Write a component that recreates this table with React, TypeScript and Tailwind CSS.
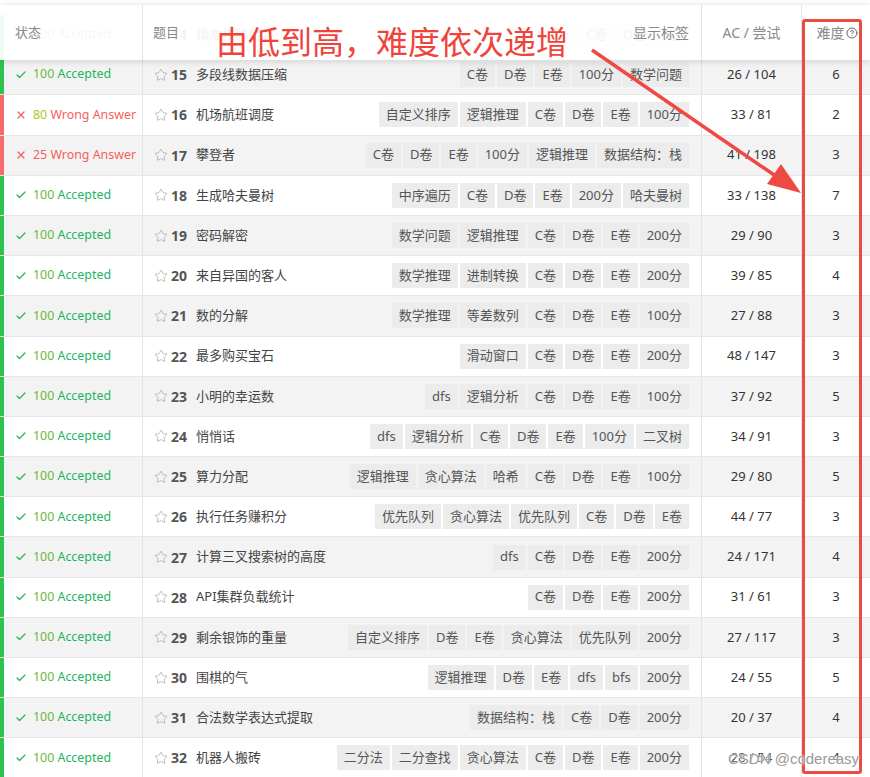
import React from "react";
import { Check, X, Star, CircleHelp } from "lucide-react";

type Row = {
  id: number;
  ok: boolean;
  score: number;
  title: string;
  tags: string[];
  ac: string;
  level: number;
};

const rows: Row[] = [
  { id: 14, ok: true, score: 100, title: "精准核酸检测", tags: ["100分", "C卷", "D卷", "E卷"], ac: "30 / 72", level: 4 },
  { id: 15, ok: true, score: 100, title: "多段线数据压缩", tags: ["C卷", "D卷", "E卷", "100分", "数学问题"], ac: "26 / 104", level: 6 },
  { id: 16, ok: false, score: 80, title: "机场航班调度", tags: ["自定义排序", "逻辑推理", "C卷", "D卷", "E卷", "100分"], ac: "33 / 81", level: 2 },
  { id: 17, ok: false, score: 25, title: "攀登者", tags: ["C卷", "D卷", "E卷", "100分", "逻辑推理", "数据结构：栈"], ac: "41 / 198", level: 3 },
  { id: 18, ok: true, score: 100, title: "生成哈夫曼树", tags: ["中序遍历", "C卷", "D卷", "E卷", "200分", "哈夫曼树"], ac: "33 / 138", level: 7 },
  { id: 19, ok: true, score: 100, title: "密码解密", tags: ["数学问题", "逻辑推理", "C卷", "D卷", "E卷", "200分"], ac: "29 / 90", level: 3 },
  { id: 20, ok: true, score: 100, title: "来自异国的客人", tags: ["数学推理", "进制转换", "C卷", "D卷", "E卷", "200分"], ac: "39 / 85", level: 4 },
  { id: 21, ok: true, score: 100, title: "数的分解", tags: ["数学推理", "等差数列", "C卷", "D卷", "E卷", "100分"], ac: "27 / 88", level: 3 },
  { id: 22, ok: true, score: 100, title: "最多购买宝石", tags: ["滑动窗口", "C卷", "D卷", "E卷", "200分"], ac: "48 / 147", level: 3 },
  { id: 23, ok: true, score: 100, title: "小明的幸运数", tags: ["dfs", "逻辑分析", "C卷", "D卷", "E卷", "100分"], ac: "37 / 92", level: 5 },
  { id: 24, ok: true, score: 100, title: "悄悄话", tags: ["dfs", "逻辑分析", "C卷", "D卷", "E卷", "100分", "二叉树"], ac: "34 / 91", level: 3 },
  { id: 25, ok: true, score: 100, title: "算力分配", tags: ["逻辑推理", "贪心算法", "哈希", "C卷", "D卷", "E卷", "100分"], ac: "29 / 80", level: 5 },
  { id: 26, ok: true, score: 100, title: "执行任务赚积分", tags: ["优先队列", "贪心算法", "优先队列", "C卷", "D卷", "E卷"], ac: "44 / 77", level: 3 },
  { id: 27, ok: true, score: 100, title: "计算三叉搜索树的高度", tags: ["dfs", "C卷", "D卷", "E卷", "200分"], ac: "24 / 171", level: 4 },
  { id: 28, ok: true, score: 100, title: "API集群负载统计", tags: ["C卷", "D卷", "E卷", "200分"], ac: "31 / 61", level: 3 },
  { id: 29, ok: true, score: 100, title: "剩余银饰的重量", tags: ["自定义排序", "D卷", "E卷", "贪心算法", "优先队列", "200分"], ac: "27 / 117", level: 3 },
  { id: 30, ok: true, score: 100, title: "围棋的气", tags: ["逻辑推理", "D卷", "E卷", "dfs", "bfs", "200分"], ac: "24 / 55", level: 5 },
  { id: 31, ok: true, score: 100, title: "合法数学表达式提取", tags: ["数据结构：栈", "C卷", "D卷", "200分"], ac: "20 / 37", level: 4 },
  { id: 32, ok: true, score: 100, title: "机器人搬砖", tags: ["二分法", "二分查找", "贪心算法", "C卷", "D卷", "E卷", "200分"], ac: "28 / 54", level: 4 },
];

const font = {
  fontFamily: '"Noto Sans", "Noto Sans CJK SC", sans-serif',
};

const scoreColor = (s: number) =>
  s >= 100 ? "text-[#6cb83a]" : s >= 60 ? "text-[#a6c91d]" : "text-[#f35f5a]";

const App = () => {
  return (
    <div className="relative w-[870px] h-[777px] overflow-hidden bg-white text-[13px]" style={font}>
      <div className="pt-[15px]">
        {rows.map((r, i) => (
          <div
            key={r.id}
            className={
              "flex h-[40.2px] border-b border-[#e6e6e6] " +
              (i % 2 === 1 ? "bg-[#f3f3f3]" : "bg-white")
            }
          >
            <div
              className={
                "w-[143px] shrink-0 flex items-center border-l-4 border-r border-r-[#e3e3e3] pl-[11px] gap-[6px] whitespace-nowrap " +
                (r.ok ? "border-l-[#2dc34e]" : "border-l-[#f56a6a]")
              }
            >
              {r.ok ? (
                <Check size={12} strokeWidth={2.5} className="text-[#2bb55c]" />
              ) : (
                <X size={12} strokeWidth={2.5} className="text-[#f35f5a]" />
              )}
              <span className="text-[12.4px]">
                <span className={scoreColor(r.score)}>{r.score}</span>{" "}
                <span className={r.ok ? "text-[#23b462]" : "text-[#f35f5a]"}>
                  {r.ok ? "Accepted" : "Wrong Answer"}
                </span>
              </span>
            </div>
            <div className="w-[559px] shrink-0 flex items-center border-r border-[#e3e3e3] pl-[11px] pr-[12px]">
              <Star size={14} strokeWidth={1.3} className="text-[#a8a8a8] mr-[3px]" />
              <span className="font-bold text-[14px] text-[#555] w-[25px]">{r.id}</span>
              <span className="text-[#444]">{r.title}</span>
              <div className="ml-auto flex gap-[2px]">
                {r.tags.map((t, k) => (
                  <span
                    key={k}
                    className="h-[25px] px-[7px] flex items-center bg-[#ececec] text-[#555] text-[13px]"
                  >
                    {t}
                  </span>
                ))}
              </div>
            </div>
            <div className="w-[100px] shrink-0 flex items-center justify-center border-r border-[#e3e3e3] text-[#333]">
              {r.ac}
            </div>
            <div className="flex-1 flex items-center justify-center text-[#333]">{r.level}</div>
          </div>
        ))}
      </div>

      {/* sticky header over the list */}
      <div className="absolute top-[5px] left-0 right-0 h-[55px] flex bg-white/[0.93] shadow-[0_1px_7px_rgba(0,0,0,0.16)] text-[#8a8a8a] text-[13px]">
        <div className="w-[143px] shrink-0 flex items-center pl-[15px] border-r border-[#e3e3e3]">状态</div>
        <div className="w-[559px] shrink-0 flex items-center justify-between pl-[10px] pr-[12px] border-r border-[#e3e3e3]">
          <span>题目</span>
          <span className="text-[14px]">显示标签</span>
        </div>
        <div className="w-[100px] shrink-0 flex items-center justify-center border-r border-[#e3e3e3] text-[14px]">
          AC / 尝试
        </div>
        <div className="flex-1 flex items-center justify-center gap-[1px] text-[14px] text-[#888] pl-[2px]">
          难度
          <CircleHelp size={12} strokeWidth={2} className="text-[#666]" />
        </div>
      </div>

      {/* annotation */}
      <div className="absolute left-[216px] top-[22px] text-[32px] leading-[40px] text-[#f0433a] whitespace-nowrap" style={font}>
        由低到高，难度依次递增
      </div>
      <div className="absolute left-[802px] top-[19px] w-[60px] h-[755px] border-[3px] border-[#ee4a43] rounded-[3px]" />
      <svg className="absolute left-0 top-0" width="870" height="777">
        <line x1="592" y1="50" x2="780" y2="179" stroke="#ee4a43" strokeWidth="3.5" />
        <polygon points="801,193 767,184 781,164" fill="#ee4a43" />
      </svg>
      <div
        className="absolute left-[728px] top-[748px] text-[15px] text-[#9a9a9a] whitespace-nowrap"
        style={{ fontFamily: '"Liberation Sans", sans-serif', textShadow: "0 0 2px #fff, 0 0 2px #fff" }}
      >
        CSDN @codereasy
      </div>
    </div>
  );
};

export default App;
